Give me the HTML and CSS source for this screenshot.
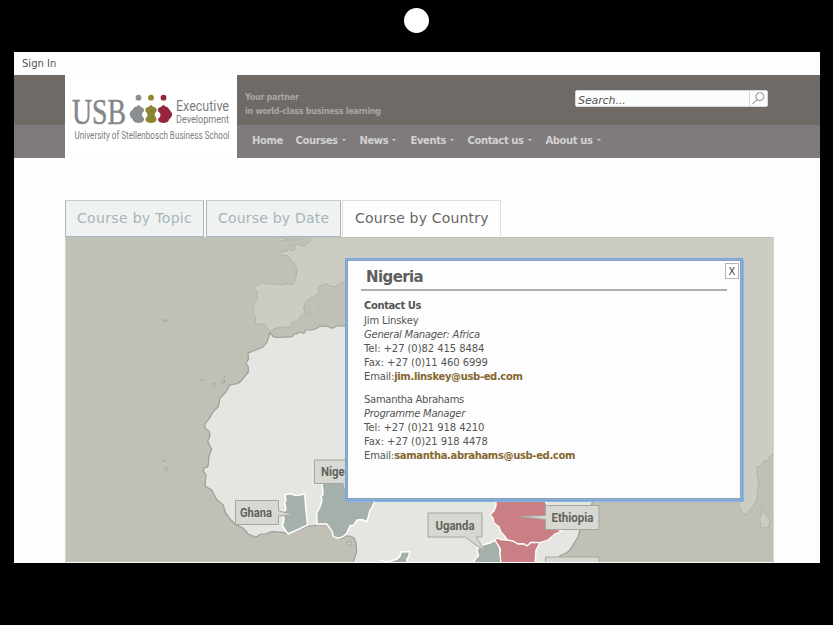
FILE: index.html
```html
<!DOCTYPE html>
<html lang="en">
<head>
<meta charset="utf-8">
<title>USB Executive Development</title>
<link rel="stylesheet" href="styles.css">
</head>
<body>
<div class="bezel"><span class="camera"></span></div>
<div class="screen">
  <div class="signin"><a>Sign In</a></div>
  <header class="header">
    <svg class="logo" viewBox="65 75 172 83" role="img" aria-label="USB Executive Development">
      <rect x="65" y="75" width="172" height="83" fill="#fff"/>
      <text class="logo-usb" x="72" y="124" textLength="54" lengthAdjust="spacingAndGlyphs">USB</text>
      <g fill="#8a8e90"><circle cx="138.500" cy="97.700" r="2.900"/><path d="M138.500 104.800C140.500 107.500 143 107 143.800 109C145 112 141.500 112 142 115C142 117 145.500 118 143.500 121C142 123.500 135 123.500 133.500 121C133 119 130 117.500 129.700 114.500C129.700 111 132.700 110.500 133.500 108.300C134.500 106.500 136.500 107.500 138.500 104.800Z"/></g>
      <g fill="#8d8432"><circle cx="151" cy="97.700" r="2.900"/><path d="M151 104.800C153 107.500 155.500 107 156.500 109C157.500 112 154.500 112 154.800 115C155 118 157.800 118 156 121C154.500 123.500 147.500 123.500 146 121C144.200 118 147.500 118 147.500 115C147.500 112 144.500 112 145.500 109C146.500 107 149 107.500 151 104.800Z"/></g>
      <g fill="#96263c"><circle cx="163.500" cy="97.700" r="2.900"/><path d="M163.500 104.800C165.500 107.500 168 106.500 169 109C170 111 172 111.500 172.200 114.500C172 117.500 169 118.500 168.500 121C167 123.500 160 123.500 158.500 121C157 118 160.500 118 160.500 115C160.500 112 157 112 158 109C159 107 161.500 107.500 163.500 104.800Z"/></g>
      <text class="logo-sub" x="176" y="111" font-size="14.500" textLength="53" lengthAdjust="spacingAndGlyphs">Executive</text>
      <text class="logo-sub" x="176" y="123" font-size="11.500" textLength="53" lengthAdjust="spacingAndGlyphs">Development</text>
      <text class="logo-sub" x="74.500" y="138.500" font-size="10.500" textLength="155" lengthAdjust="spacingAndGlyphs">University of Stellenbosch Business School</text>
    </svg>
    <div class="header-main">
      <div class="header-top">
        <p class="tagline">Your partner<br>in world-class business learning</p>
        <div class="search">
          <span class="search-field">Search...</span>
          <span class="search-button"><svg viewBox="0 0 17 16"><circle cx="10" cy="6" r="4.200"/><path d="M7 9L2 14"/></svg></span>
        </div>
      </div>
      <nav class="nav">
        <a class="home">Home</a>
        <a class="courses drop">Courses</a>
        <a class="news drop">News</a>
        <a class="events drop">Events</a>
        <a class="contact drop">Contact us</a>
        <a class="about drop">About us</a>
      </nav>
    </div>
  </header>
  <main class="content">
    <div class="tabs">
      <a class="tab topic">Course by Topic</a>
      <a class="tab date">Course by Date</a>
      <a class="tab country">Course by Country</a>
    </div>
    <div class="map">
      <svg class="map-art" viewBox="66 238 707 324" preserveAspectRatio="none">
        <rect x="66" y="238" width="707" height="324" fill="#c1c0b7"/>
        <g class="faded">
          <path d="M311.700 236L310 241.700L307 243L305 246L301 246L298 244L295 245L295 249L293 251L289 249.500L286 251.500L280 251.700L280 254L283 255.700L287 255.500L290 258L292 262L295 263.500L297 270L296 277L293.500 284L290 285L286 283.500L282 285L275 284L270 284L263 282.700L260 284L255 286L255 290L257.500 292L256 295L258 298L254 304L254 309L252.700 311.700L255 316L255.700 323L259 324.500L261 323.500L265 325L268 329L270 331L276 328L282 327.500L290 326.700L293 322L298 320.700L300 317L305 313L303.500 309L305.700 301.700L312 297L318 294L319 286L326.700 284L331 286.500L335 286.700L340 283L348 282V500H738.500L739.300 506.700L743 514H747.700L750 509L753 506.700L756.700 500L757.500 490L759 483L757 475V467L762 465L764 461L768 460.700L770 456L774 453V236Z"/>
          <path d="M275 241L277 238H284L287 240L291 238H300L296 240H287L283 240L280 241Z"/>
          <path d="M759.300 505L762 507L764 513L768 517L770 521.700L768 527.700L761.700 528L760 525L761 522L759.300 520L761.500 515L761 510Z"/>
          <path d="M316 308Q317 306 320 308Q319 312 316 308Z"/><circle cx="310" cy="313" r="1.300"/>
        </g>
        <path class="africa" d="M270 332.700L273.300 336.700L278 337.500L292.300 336.700L294 334L297 334L299 332L304 333.300L306 330L312 330L316.700 328.300L320 326L328 326.500L331.700 328.300L336.700 326H350V480H593V500C591 507 588 515 584 522L580 530L578 537L573 545L570 550L566.700 552.700L560 555.700L553 563H353L356.700 551.700L356 543L354 538L350 536L345 536L342 538.500L337.300 537.700L333.300 536.700L331.500 530L326.700 525H318L306.700 526.700L296 531L288.300 534L282.700 532.300L271.700 531.700L266 534H261L255.700 537.300L248.300 534L243.300 528.300L235 524L230 519L225 511.700L223.300 505L217 500L211.700 490L205 486L206 475L203.300 471L204 468L207.500 467L208.300 465L209 456L211.700 449L207.700 441.700L210 435L209 431L205 428V424L209 419L213.300 411.700L218.300 406.700L220 398L226 392L230 385L238 383.500L241 381L248.300 372V367L246 363.300L248.500 359L248 353L263 347L267 342Z"/>
        <g class="island"><ellipse cx="165.200" cy="320.700" rx="2.400" ry=".8"/><circle cx="201.700" cy="380" r=".7"/><circle cx="214.500" cy="384.500" r="1.400"/><path d="M222 383L223 379L225 380L224 383ZM224 377L226 375.500"/><circle cx="164.500" cy="461" r=".7"/><circle cx="166.500" cy="469" r="1.500"/><circle cx="349.300" cy="543.500" r="2"/></g>
        <path class="land-line" d="M550 499Q556 502 561 499"/>
        <g class="green">
          <path d="M285 495L290 493.500L294 495L297 495.500L305 494V498L306 511L307.500 525L297 530L288.300 534L286 531L282.500 526L284 519L282.500 514L286 509L284.500 502L286 500Z"/>
          <path d="M322 482H352V498H375.500L374 503L371.700 508L370 510L368 518L366.700 521.700L362 519.500L357 520L354 525L350 526L347 533L344 536L341 537.500L337.300 538L333.300 536.700L332 531L326.700 524H317L316.700 513L320 507L322 500L321 497L323 494Z"/>
          <path d="M473 563L476 558L478.500 556L476.700 550L480 546L486 544L490 543L495 540L499 546L500 550L501 563Z"/>
          <path d="M380 563L381 560L385 562L391 561L397 559L400 556L401 551.700L404 552L409.500 551.500L409 556L407 559V563Z"/>
        </g>
        <g class="red">
          <path d="M496 496V506L494 511L490 515L493 518L494 523L499 527L501 532L505.700 537.300L507 540L513 541L518 544L524 544L527 546L531 542.500L540 542.700L548 540L555 534L562 531L550 527V510L546 503L542 496Z"/>
          <path d="M495 540L497 538L501 539.500L507 540L513 541L518 544L524 544L527 546L531 542.500L540 542.700L536 550L535 563H501L500 553L500.500 549Z"/>
        </g>
        <g class="label">
          <path d="M314.500 460H370V483.500H350L347 504L343 483.500H314.500Z"/>
          <path d="M235.500 500.500H278.500V511L295 514.700L278.500 516V524.500H235.500Z"/>
          <path d="M428 513H482V537H476L486 552L465 537H428Z"/>
          <path d="M545.500 505.500H599V529.500H545.500V519.500L519 516.500L545.500 515.500Z"/>
          <path d="M545.500 557H599V570H545.500Z"/>
        </g>
        <g class="label-text">
          <text x="321" y="476" textLength="37" lengthAdjust="spacingAndGlyphs">Nigeria</text>
          <text x="240" y="517" textLength="32" lengthAdjust="spacingAndGlyphs">Ghana</text>
          <text x="435.500" y="529.500" textLength="39" lengthAdjust="spacingAndGlyphs">Uganda</text>
          <text x="551.500" y="522" textLength="42" lengthAdjust="spacingAndGlyphs">Ethiopia</text>
        </g>
      </svg>
      <section class="popup">
        <button class="close">X</button>
        <h2>Nigeria</h2>
        <div class="details">
          <p><b>Contact Us</b><br>Jim Linskey<br><i>General Manager: Africa</i><br><span class="phone">Tel: +27 (0)82 415 8484<br>Fax: +27 (0)11 460 6999</span><br>Email:<a class="mail">jim.linskey@usb-ed.com</a></p>
          <p><span class="name">Samantha Abrahams</span><br><i>Programme Manager</i><br><span class="phone">Tel: +27 (0)21 918 4210<br>Fax: +27 (0)21 918 4478</span><br>Email:<a class="mail">samantha.abrahams@usb-ed.com</a></p>
        </div>
      </section>
    </div>
  </main>
</div>
</body>
</html>
```
FILE: styles.css
```css
* { box-sizing: border-box; }
body {
  margin: 0;
  height: 625px;
  overflow: hidden;
  background: #000;
  color: #555;
  font: 10px/14.2px "DejaVu Sans", Verdana, sans-serif;
}
.bezel { height: 52px; display: flex; justify-content: center; padding-top: 8px; }
.camera { width: 25px; height: 25px; border-radius: 50%; background: #fff; }
.screen {
  width: 806px;
  height: 510.5px;
  margin-left: 14px;
  overflow: hidden;
  background: #fdfdfd;
}
.signin { height: 23px; padding: 4px 8px; line-height: 15px; }
.header {
  height: 83px;
  display: flex;
  padding-left: 51px;
  background: linear-gradient(#706a67 0 50px, #7f7a7b 50px);
}
.logo { width: 172px; height: 83px; flex: none; }
.logo-usb { font: 36px "Liberation Serif", serif; fill: #858788; stroke: #858788; stroke-width: .5; }
.logo-sub { font-family: Roboto, sans-serif; fill: #7d7d7d; }
.header-main { flex: 1; }
.header-top { height: 50px; display: flex; justify-content: space-between; padding: 15px 52px 0 8px; }
.tagline { margin: 1px 0 0; color: #aaa5a3; font-size: 8px; font-weight: bold; letter-spacing: -.28px; }
.search {
  width: 193px;
  height: 17px;
  display: flex;
  background: #fbfdfd;
  border: 1px solid #d5d9d9;
  border-radius: 2px;
}
.search-field { flex: 1; padding-left: 2px; font-size: 11px; line-height: 19px; font-style: italic; letter-spacing: -.1px; }
.search-button { width: 18px; border-left: 1px solid #d5d9d9; }
.search-button svg { width: 17px; height: 15px; display: block; fill: none; stroke: #999; stroke-width: 1.2; }
.nav { height: 33px; display: flex; padding-left: 15px; line-height: 32px; color: #d3d1d1; font-weight: bold; letter-spacing: -.4px; }
.nav a { white-space: nowrap; }
.home { width: 43.5px; }
.courses { width: 64px; }
.news { width: 51px; }
.events { width: 57px; }
.contact { width: 78px; }
.drop::after {
  content: "";
  display: inline-block;
  margin: 0 0 3px 4px;
  border: 2.5px solid transparent;
  border-top-color: #d3d1d1;
  border-bottom: 0;
}
.content { width: 709px; margin: 42px 0 0 51px; }
.tabs { height: 37px; display: flex; gap: 2px; }
.tab {
  height: 37px;
  padding-left: 11px;
  border: 1px solid #a8b8bc;
  border-top-color: #c5cdce;
  background: #f0f2f1;
  color: #a7b5ba;
  font-size: 14px;
  line-height: 35px;
  letter-spacing: .2px;
  white-space: nowrap;
}
.topic { width: 139px; letter-spacing: .33px; }
.date { width: 135px; }
.country { width: 159px; padding-left: 12px; margin-left: -1px; background: #fefefe; border-color: #dedede; border-bottom-color: #fefefe; color: #686565; letter-spacing: .18px; }
.map { position: relative; height: 326px; border: 1px solid #d5d5d3; border-top-color: #bfc0b9; border-bottom: 0; }
.map-art { display: block; width: 707px; height: 324px; }
.faded path, .faded circle { fill: #cdccc3; stroke: #b4b3aa; stroke-width: 1; }
.africa { fill: #e5e5e1; stroke: #9e9d97; stroke-width: 1.2; }
.island { fill: #d0d0c8; stroke: #96958f; stroke-width: .8; }
.land-line { fill: none; stroke: #8f8f8b; }
.green { fill: #a5b0ab; stroke: #fff; stroke-width: 1.5; }
.red { fill: #c97f83; stroke: #fff; stroke-width: 1.3; }
.label { fill: #d8d8d2; stroke: #a6a6a1; stroke-width: 1; }
.label-text { font: bold 13px Roboto, sans-serif; fill: #62625e; }
.popup {
  position: absolute;
  left: 281px;
  top: 22px;
  width: 394px;
  height: 239px;
  padding: 8px 14px 0 13px;
  background: #fdfdfd;
  border: 1px solid #8d9fb5;
  box-shadow: 0 0 0 1px #8db0d8, 0 0 0 2px #6fa6e0, 0 0 1px 2.5px #8fb7e2;
}
.popup h2 {
  height: 22px;
  width: 366px;
  margin: 0;
  padding-left: 5px;
  border-bottom: 2px solid #adadad;
  color: #605e5e;
  font-size: 15px;
  line-height: 17px;
  letter-spacing: -.6px;
}
.close {
  position: absolute;
  right: 1px;
  top: 2px;
  width: 14px;
  height: 16px;
  padding: 0;
  border: 1px solid #b3b3b3;
  background: #fff;
  color: #444;
  font: 10px/13px "DejaVu Sans", sans-serif;
}
.details { padding: 8.4px 3px; letter-spacing: -.15px; }
.details p { margin: 0 0 8px; }
.details i { letter-spacing: -.26px; }
.details b { letter-spacing: -.4px; }
.phone { letter-spacing: -.07px; }
.name { letter-spacing: -.3px; }
.mail { color: #83672e; font-weight: bold; letter-spacing: -.35px; }
```
